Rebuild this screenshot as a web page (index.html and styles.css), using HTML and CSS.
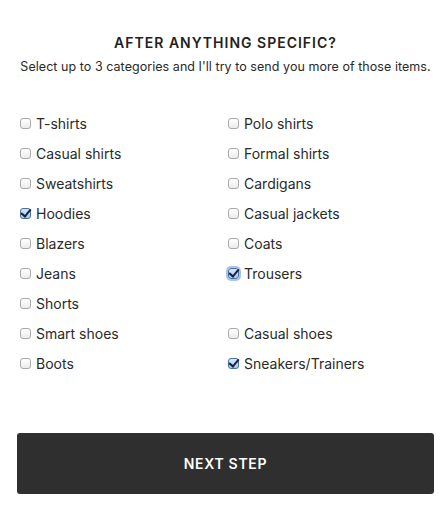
FILE: index.html
```html
<!DOCTYPE html>
<html>
<head>
<meta charset="utf-8">
<link rel="stylesheet" href="styles.css">
</head>
<body>
<div class="page">
  <h1 class="title">AFTER ANYTHING SPECIFIC?</h1>
  <p class="subtitle">Select up to 3 categories and I'll try to send you more of those items.</p>
  <div class="grid">
    <label class="opt"><input type="checkbox" class="box"><span>T-shirts</span></label>
    <label class="opt"><input type="checkbox" class="box"><span>Polo shirts</span></label>
    <label class="opt"><input type="checkbox" class="box"><span>Casual shirts</span></label>
    <label class="opt"><input type="checkbox" class="box"><span>Formal shirts</span></label>
    <label class="opt"><input type="checkbox" class="box"><span>Sweatshirts</span></label>
    <label class="opt"><input type="checkbox" class="box"><span>Cardigans</span></label>
    <label class="opt"><input type="checkbox" class="box" checked><span>Hoodies</span></label>
    <label class="opt"><input type="checkbox" class="box"><span>Casual jackets</span></label>
    <label class="opt"><input type="checkbox" class="box"><span>Blazers</span></label>
    <label class="opt"><input type="checkbox" class="box"><span>Coats</span></label>
    <label class="opt"><input type="checkbox" class="box"><span>Jeans</span></label>
    <label class="opt"><input type="checkbox" class="box focus" checked><span>Trousers</span></label>
    <label class="opt"><input type="checkbox" class="box"><span>Shorts</span></label>
    <div class="opt empty"></div>
    <label class="opt"><input type="checkbox" class="box"><span>Smart shoes</span></label>
    <label class="opt"><input type="checkbox" class="box"><span>Casual shoes</span></label>
    <label class="opt"><input type="checkbox" class="box"><span>Boots</span></label>
    <label class="opt"><input type="checkbox" class="box" checked><span>Sneakers/Trainers</span></label>
  </div>
  <button class="next">NEXT STEP</button>
</div>
</body>
</html>
```
FILE: styles.css
```css
* { box-sizing: border-box; }
html, body { margin: 0; padding: 0; background: #fff; }
body { font-family: Inter, "Liberation Sans", sans-serif; color: #2a2a2a; }
.page { padding: 34px 11px 0 17px; }
.title {
  margin: 0;
  text-align: center;
  font-size: 14px;
  font-weight: 600;
  letter-spacing: 1px;
  line-height: 18px;
  color: #222;
}
.subtitle {
  margin: 7px 0 0;
  text-align: center;
  font-size: 12.5px;
  line-height: 16px;
  letter-spacing: 0.05px;
  color: #2a2a2a;
}
.grid {
  margin-top: 33px;
  padding-left: 3px;
  display: grid;
  grid-template-columns: 208px 1fr;
  grid-auto-rows: 30px;
}
.opt {
  display: flex;
  align-items: center;
  gap: 5px;
  font-size: 14px;
  height: 30px;
  color: #2a2a2a;
}
.box {
  -webkit-appearance: none;
  appearance: none;
  margin: 0;
  width: 11px;
  height: 11px;
  border: 1px solid #a9a9a9;
  border-radius: 3px;
  background: linear-gradient(#fff, #ececec);
  position: relative;
}
.box:checked {
  border-color: #4a6fa0;
  background: linear-gradient(#d5e6fa, #a9c8ee);
}
.box:checked::after {
  content: "";
  position: absolute;
  left: 2px;
  top: -2px;
  width: 4px;
  height: 8px;
  border: solid #142540;
  border-width: 0 2.5px 2.5px 0;
  transform: rotate(40deg);
}
.box.focus { box-shadow: 0 0 0 2px rgba(90, 150, 230, 0.55); }
.next {
  display: block;
  width: 417px;
  height: 61px;
  margin-top: 55px;
  border: none;
  border-radius: 3px;
  background: #2f2f2f;
  color: #fff;
  font-family: Inter, "Liberation Sans", sans-serif;
  font-size: 14px;
  font-weight: 600;
  letter-spacing: 0.7px;
}
```
